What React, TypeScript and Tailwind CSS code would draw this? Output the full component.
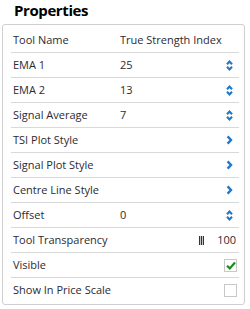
const rows: { label: string; value?: string; kind: "text" | "spin" | "arrow" | "slider" | "check" }[] = [
  { label: "Tool Name", value: "True Strength Index", kind: "text" },
  { label: "EMA 1", value: "25", kind: "spin" },
  { label: "EMA 2", value: "13", kind: "spin" },
  { label: "Signal Average", value: "7", kind: "spin" },
  { label: "TSI Plot Style", kind: "arrow" },
  { label: "Signal Plot Style", kind: "arrow" },
  { label: "Centre Line Style", kind: "arrow" },
  { label: "Offset", value: "0", kind: "spin" },
  { label: "Tool Transparency", kind: "slider" },
  { label: "Visible", kind: "check" },
  { label: "Show In Price Scale", kind: "check" },
]

function SpinIcon() {
  return (
    <svg width="7" height="11" viewBox="0 0 7 11" className="mr-[4px] text-[#1f78c8]">
      <path d="M1 4.2 L3.5 1.6 L6 4.2" fill="none" stroke="currentColor" strokeWidth="2.2" />
      <path d="M1 6.8 L3.5 9.4 L6 6.8" fill="none" stroke="currentColor" strokeWidth="2.2" />
    </svg>
  )
}

function ArrowIcon() {
  return (
    <svg width="7" height="10" viewBox="0 0 7 10" className="mr-[4px] text-[#1f78c8]">
      <path d="M1.6 1.4 L5 5 L1.6 8.6" fill="none" stroke="currentColor" strokeWidth="2.4" />
    </svg>
  )
}

function Checkbox({ checked }: { checked: boolean }) {
  return (
    <div className="w-[13px] h-[13px] border border-[#c8c8c8] bg-white flex items-center justify-center">
      {checked && (
        <svg width="10" height="9" viewBox="0 0 10 9">
          <path d="M1 4.8 L3.8 7.4 L9 1.6" fill="none" stroke="#1e8a1e" strokeWidth="2.2" />
        </svg>
      )}
    </div>
  )
}

export default function App() {
  return (
    <div className="w-[250px] h-[309px] bg-white px-[2px] font-['Open_Sans',sans-serif] text-[#2b2b33]">
      <h1 className="h-[24px] pl-3 text-[15px] font-bold leading-[20px] tracking-[-0.4px] text-black">Properties</h1>
      <div className="w-[243px] border border-[#cfcfcf] rounded-[3px] pl-2 pr-[5px] pt-[3px] pb-[1px]">
        {rows.map((r, i) => (
          <div
            key={r.label}
            className={`h-[25px] flex items-center text-[11px] pl-[2px] pr-[2px] ${i < rows.length - 1 ? "border-b border-[#d9d9d9]" : ""}`}
          >
            <span className="w-[107px] shrink-0">{r.label}</span>
            {r.value && <span className="flex-1">{r.value}</span>}
            {!r.value && <span className="flex-1" />}
            {r.kind === "spin" && <SpinIcon />}
            {r.kind === "arrow" && <ArrowIcon />}
            {r.kind === "slider" && (
              <div className="flex items-center gap-[13px]">
                <svg width="5" height="9" viewBox="0 0 5 9">
                  <rect x="0" y="0" width="1.2" height="9" fill="#333" />
                  <rect x="1.9" y="0" width="1.2" height="9" fill="#333" />
                  <rect x="3.8" y="0" width="1.2" height="9" fill="#333" />
                </svg>
                <span className="mr-[1px]">100</span>
              </div>
            )}
            {r.kind === "check" && <Checkbox checked={r.label === "Visible"} />}
          </div>
        ))}
      </div>
    </div>
  )
}
